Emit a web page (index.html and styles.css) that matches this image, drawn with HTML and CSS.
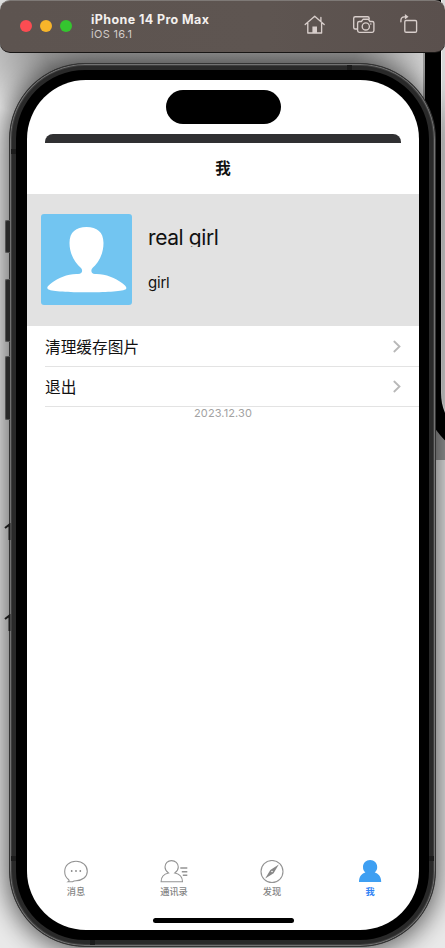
FILE: index.html
```html
<!DOCTYPE html>
<html lang="zh-CN">
<head>
<meta charset="utf-8">
<title>iPhone 14 Pro Max</title>
<link rel="stylesheet" href="styles.css">
</head>
<body>
<div class="desktop">
  <div class="back-window"><div class="back-device"></div></div>
  <header class="titlebar">
    <div class="lights"><i class="red"></i><i class="yellow"></i><i class="green"></i></div>
    <div class="caption"><strong>iPhone 14 Pro Max</strong><span>iOS 16.1</span></div>
    <div class="tools">
      <svg class="home" width="22" height="20" viewBox="0 0 22 20"><path d="M1.2 9.500 10.700 1.300 20.200 9.500M3.800 8V18H17.600V8M16.900 6.200V2.400"/><path class="solid" d="M8.400 11.500h4.600V18H8.400z"/></svg>
      <svg class="camera" width="24" height="20" viewBox="0 0 24 20"><path d="M4.700 14H3.200Q1.700 14 1.700 12.500V3.200Q1.700 1.700 3.200 1.700H15.600Q17.200 1.700 17.200 3.500V4M7.300 6.500H9.400L11.200 4.200H16.200L18 6.500H20.300Q21.900 6.500 21.900 8V15.600Q21.900 17.300 20.300 17.300H7.300Q5.600 17.300 5.600 15.600V8Q5.600 6.500 7.300 6.500Z"/><circle cx="13.800" cy="11.400" r="3.600"/><circle class="solid" cx="18.800" cy="9" r=".8"/></svg>
      <svg class="rotate" width="19" height="20" viewBox="0 0 19 20"><rect x="4.800" y="5.500" width="11.800" height="11.700" rx="1.300"/><path d="M.9 6.700V5.500Q.9 2 4.400 1.800H6"/><path class="solid" d="M4.900-.9 8.500 1.800 4.900 4.500z"/></svg>
    </div>
  </header>
  <main class="device">
    <i class="key mute"></i><i class="key up"></i><i class="key down"></i>
    <svg class="tick tick-a" width="8" height="18" viewBox="0 0 8 18"><path d="M1 5 5.500 1.500V17"/></svg>
    <svg class="tick tick-b" width="8" height="18" viewBox="0 0 8 18"><path d="M1 5 5.500 1.500V17"/></svg>
    <i class="seam seam-tl"></i><i class="seam seam-tr"></i><i class="seam seam-bl"></i><i class="seam seam-bb"></i><i class="seam seam-br"></i>
    <div class="screen">
      <div class="status"><div class="island"></div></div>
      <div class="sheet"></div>
      <h1 class="nav">我</h1>
      <section class="profile">
        <svg class="avatar" width="91" height="91" viewBox="0 0 91 91"><rect width="91" height="91" rx="3" fill="#72c5f1"/><path fill="#fff" d="M45.500 13C56 13 62.500 18 62.500 29C62.500 40 57.500 49 51.500 54C49.500 56 50 60 54 60C64 59.500 74 64 81 69C85 72 86.500 74 84.500 75.500C76 79.300 15 79.300 7.500 75.500C5 74 6.500 72 10.500 69C17.500 64 27 59.500 37 60C41.500 60 42 56 40 54C34 49 28.500 40 28.500 29C28.500 18 35 13 45.500 13Z"/></svg>
        <div class="who"><div class="name">real girl</div><div class="id">girl</div></div>
      </section>
      <ul class="menu">
        <li><span>清理缓存图片</span><svg width="8" height="13" viewBox="0 0 8 13"><path d="M1.300 1.500 6.500 6.500 1.300 11.500"/></svg></li>
        <li><span>退出</span><svg width="8" height="13" viewBox="0 0 8 13"><path d="M1.300 1.500 6.500 6.500 1.300 11.500"/></svg></li>
      </ul>
      <div class="date">2023.12.30</div>
      <nav class="tabs">
        <div class="tab"><svg width="28" height="24" viewBox="0 0 28 24"><path d="M6.200 19.200C3.900 17.500 2.700 14.500 2.700 11.500C2.700 5.500 7.500 1.300 14 1.300S25.300 5.500 25.300 11.200S20.500 20.600 14 20.700C12.700 20.700 11.500 21 10.500 21.700H6.200C7.300 21 7.500 20.200 6.200 19.200Z"/><g class="dots"><circle cx="9.700" cy="11" r=".9"/><circle cx="14" cy="11" r=".9"/><circle cx="18.300" cy="11" r=".9"/></g></svg><span>消息</span></div>
        <div class="tab"><svg width="28" height="24" viewBox="0 0 28 24"><path d="M8.500 13C6.100 11.200 5 9.200 5 7C5 3.300 7.800.6 11.500.6S18.300 3.300 18.300 7C18.300 9.200 17.200 11.200 14.800 13C19.300 14 22.500 16.500 22.500 21.700H1.100C1.100 16.500 4 14 8.500 13Z"/><path class="bars" d="M20.300 8H27.300M21.800 11.700H27.300M22.800 15.300H27.300"/></svg><span>通讯录</span></div>
        <div class="tab"><svg width="28" height="24" viewBox="0 0 28 24"><circle cx="14" cy="11.500" r="11"/><path class="needle" d="M20.800 4.500 15.600 13.200 7.200 18.600 12.300 9.900Z"/><circle class="hub" cx="14" cy="11.500" r=".8"/></svg><span>发现</span></div>
        <div class="tab active"><svg width="28" height="24" viewBox="0 0 28 24"><path d="M9.400 12.500C7.600 11.300 7 9.400 7 7.100C7 3 10 0 14.100 0S21.200 3 21.200 7.100C21.200 9.400 20.500 11.300 18.700 12.500C22.800 13.500 25.200 17 25.200 22H3C3 17 5.300 13.500 9.400 12.500Z"/></svg><span>我</span></div>
      </nav>
      <div class="home-bar"></div>
    </div>
  </main>
</div>
</body>
</html>
```
FILE: styles.css
```css
* { box-sizing: border-box; }
body {
  margin: 0;
  font-family: Inter, "Noto Sans CJK SC", sans-serif;
  color: #111;
}
.desktop {
  position: relative;
  width: 445px;
  height: 948px;
  overflow: hidden;
  background: radial-gradient(ellipse 260px 90px at 200px 50px, rgba(0, 0, 0, .35) 60%, transparent), #eaeaea;
}
.back-window {
  position: absolute;
  top: 0;
  right: 0;
  width: 22px;
  height: 460px;
  overflow: hidden;
  background: #999;
}
.back-device {
  position: absolute;
  left: 2px;
  top: -100px;
  width: 110px;
  height: 559px;
  border: 16px solid #000;
  border-radius: 0 0 0 66px;
  background: #d8d8d8;
  box-shadow: inset 1px 0 #eee;
}
.titlebar {
  position: relative;
  z-index: 2;
  display: flex;
  align-items: flex-start;
  height: 53px;
  padding-left: 20px;
  border-radius: 10px;
  background: linear-gradient(90deg, #5d5450, #5e5551 60%, #5a504d);
  border-top: 1px solid #7e7976;
  border-bottom: 1px solid #181615;
}
.lights { display: flex; gap: 8px; margin-top: 19px; }
.lights i { width: 12px; height: 12px; border-radius: 50%; }
.red { background: #fb4c52; }
.yellow { background: #f7b52a; }
.green { background: #34c52f; }
.caption {
  display: flex;
  flex-direction: column;
  width: 214px;
  margin: 11px 0 0 19px;
  line-height: 15px;
  color: #f3f0ee;
}
.caption strong { font-size: 12.500px; font-weight: 750; letter-spacing: .4px; }
.caption span { font-size: 11px; line-height: 14px; letter-spacing: .3px; color: #d2cbc8; }
.tools { display: flex; margin-top: 14px; }
.tools svg { overflow: visible; fill: none; stroke: #d8cecb; stroke-width: 1.350; stroke-linejoin: round; stroke-linecap: round; }
.tools .solid { fill: #d8cecb; stroke: none; }
.home { margin-right: 26px; margin-left: -1px; }
.camera { margin-right: 24px; }
.device {
  position: relative;
  width: 427px;
  height: 884px;
  margin: 10px 0 0 9px;
  padding: 16px 17px;
  border: 1px solid #343434;
  border-radius: 76px;
  background: #000;
  box-shadow:
    inset 0 0 0 1px #727272,
    inset 0 0 0 2px #3e3e3e,
    inset 0 0 0 6px #292929,
    0 2px 26px 3px rgba(0, 0, 0, .6);
}
.key {
  position: absolute;
  left: -5px;
  width: 5px;
  border: 1px solid #555;
  border-right: 0;
  border-radius: 2px 0 0 2px;
  background: #292929;
}
.mute { top: 156px; height: 33px; }
.up { top: 215px; height: 63px; }
.down { top: 292px; height: 64px; }
.tick { position: absolute; left: -6px; fill: none; stroke: #1c1c1c; stroke-width: 2; }
.tick-a { top: 459px; }
.tick-b { top: 550px; }
.seam { position: absolute; width: 5px; height: 5px; background: #1b1b1b; }
.seam-tl, .seam-bl { left: 1px; }
.seam-tl { top: 85px; }
.seam-bl, .seam-br { top: 792px; }
.seam-br { right: 1px; }
.seam-tr { top: 1px; right: 83px; }
.seam-bb { bottom: 1px; left: 80px; }
.screen {
  display: flex;
  flex-direction: column;
  width: 392px;
  height: 850px;
  overflow: hidden;
  border-radius: 59px;
  background: #fff;
}
.status { flex: none; height: 54px; padding-top: 10px; }
.island { width: 115px; height: 34px; margin-left: 138.500px; border-radius: 17px; background: #000; }
.sheet { flex: none; height: 9px; margin: 0 18px; border-radius: 8px 8px 0 0; background: #303032; }
.nav {
  flex: none;
  height: 51px;
  margin: 0;
  line-height: 51px;
  font-size: 15.500px;
  font-weight: 700;
  text-align: center;
}
.profile { display: flex; flex: none; height: 132px; padding: 20px 14px; gap: 16px; background: #e2e2e2; }
.avatar { display: block; flex: none; }
.who { padding-top: 11px; }
.name {
  height: 22px;
  overflow: hidden;
  font-size: 21px;
  line-height: 26px;
  letter-spacing: -.4px;
}
.id { margin-top: 26px; font-size: 15px; line-height: 20px; letter-spacing: -.2px; }
.menu { flex: none; margin: 0; padding: 0 0 0 18px; list-style: none; }
.menu li {
  display: flex;
  align-items: center;
  justify-content: space-between;
  height: 41px;
  padding: 0 18px 0 0;
  border-bottom: 1px solid #e3e3e3;
  font-size: 15.700px;
}
.menu svg { fill: none; stroke: #b8b8b8; stroke-width: 1.800; stroke-linecap: round; }
.menu li:last-child { height: 40px; }
.date { flex: none; height: 12px; font-size: 11px; line-height: 12px; letter-spacing: .1px; text-align: center; color: #a2a2a2; }
.tabs { display: flex; margin-top: auto; }
.tab {
  display: flex;
  flex: 1;
  flex-direction: column;
  align-items: center;
  font-size: 9.200px;
  line-height: 14px;
  font-weight: 500;
  color: #858585;
}
.tab svg { fill: none; stroke: #949494; stroke-width: 1.100; margin-bottom: 1px; }
.tab .dots, .tab .needle { fill: #888; stroke: none; }
.tab .hub { fill: #fff; stroke: none; }
.tab .bars { stroke-width: 1.500; }
.tab.active { color: #3183f5; font-weight: 700; }
.tab.active svg { fill: #3e9ff2; stroke: none; }
.home-bar { flex: none; width: 141px; height: 5px; margin: 19px auto 7px; border-radius: 3px; background: #000; }
```
